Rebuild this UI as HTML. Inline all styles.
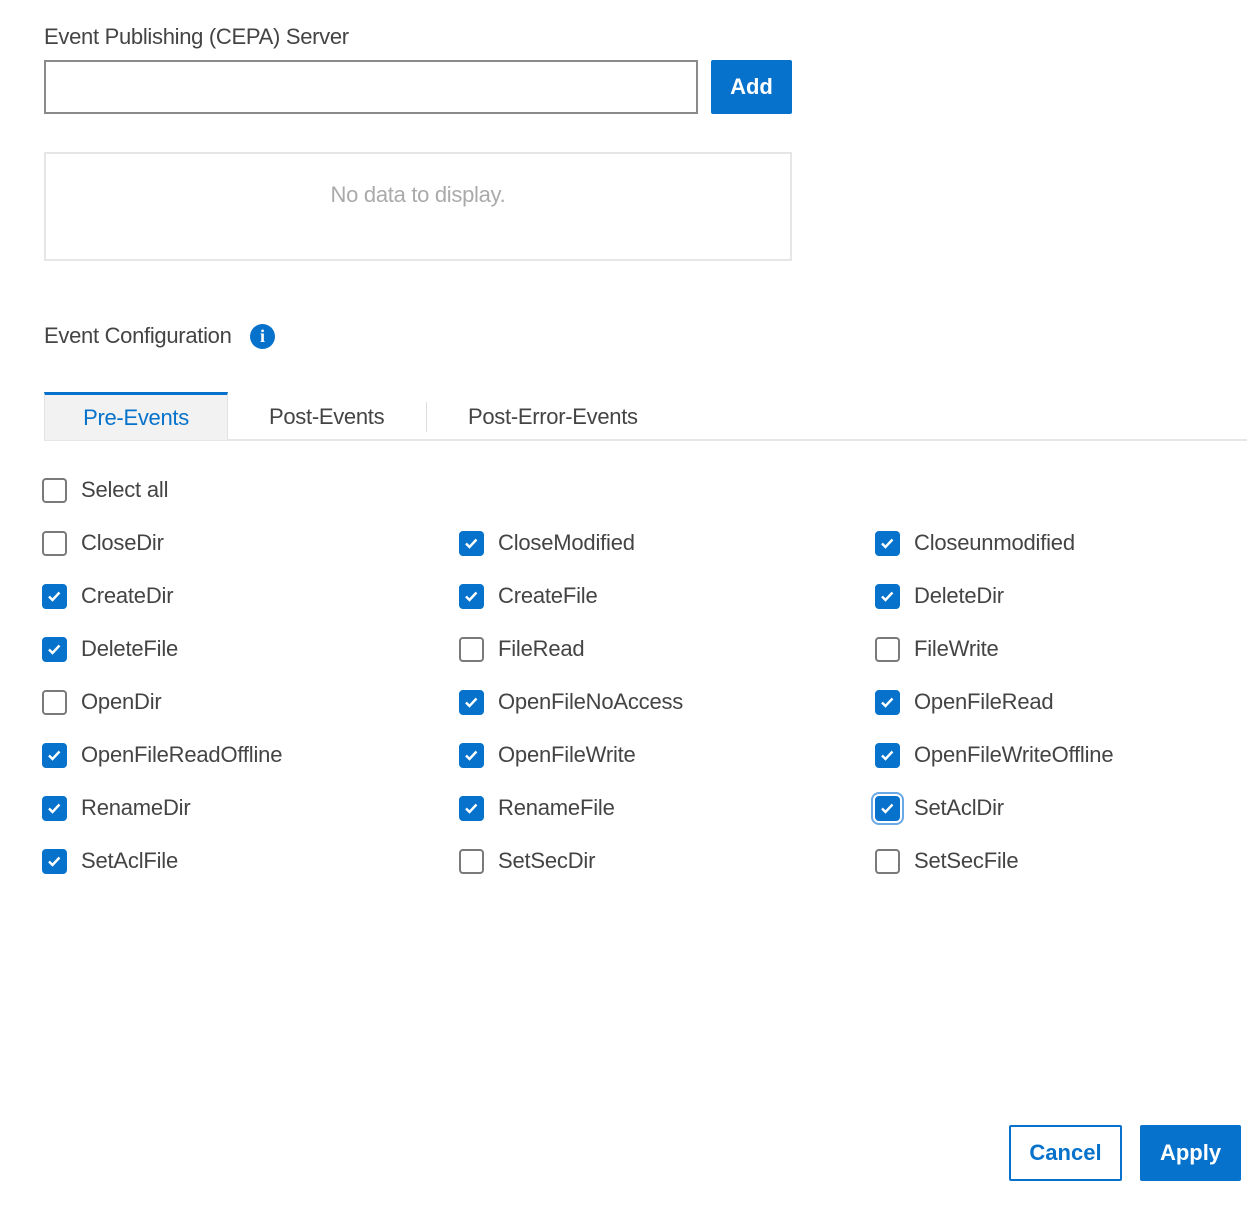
<!DOCTYPE html>
<html><head><meta charset="utf-8"><style>
*{box-sizing:border-box;margin:0;padding:0}
body{width:1253px;height:1205px;background:#fff;font-family:"Liberation Sans",sans-serif;color:#444;position:relative;overflow:hidden}
.a{position:absolute;white-space:nowrap}
.t{font-size:22px;line-height:26px;letter-spacing:-0.3px}
.cb{position:absolute;width:25px;height:25px;border:2px solid #7a7a7a;border-radius:4px;background:#fff}
.cb.on{background:#0672cb;border-color:#0672cb}
.cb.on svg{position:absolute;left:2px;top:2px}
.lbl{position:absolute;font-size:22px;line-height:26px;color:#444;letter-spacing:-0.2px;white-space:nowrap}
</style></head><body>
<div class="a t" style="left:44px;top:24px">Event Publishing (CEPA) Server</div>
<div class="a" style="left:44px;top:60px;width:654px;height:54px;border:2px solid #8a8a8a"></div>
<div class="a" style="left:711px;top:60px;width:81px;height:54px;background:#0672cb;border-radius:2px;color:#fff;font-weight:bold;font-size:22px;line-height:54px;text-align:center">Add</div>
<div class="a" style="left:44px;top:152px;width:748px;height:109px;border:2px solid #e6e6e6"></div>
<div class="a t" style="left:44px;top:182px;width:748px;text-align:center;color:#aaa">No data to display.</div>
<div class="a t" style="left:44px;top:323px">Event Configuration</div>
<div class="a" style="left:250px;top:324px;width:25px;height:25px;border-radius:50%;background:#0672cb;color:#fff;font-weight:bold;font-size:18px;line-height:25px;text-align:center;font-family:'Liberation Serif',serif">i</div>
<div class="a" style="left:44px;top:439px;width:1203px;height:2px;background:#e6e6e6"></div>
<div class="a" style="left:44px;top:392px;width:184px;height:48px;background:#f2f2f2;border-top:3px solid #0672cb;border-left:1px solid #e3e3e3;border-right:1px solid #e3e3e3"></div>
<div class="a t" style="left:44px;top:405px;width:184px;text-align:center;color:#0672cb">Pre-Events</div>
<div class="a t" style="left:269px;top:404px">Post-Events</div>
<div class="a" style="left:426px;top:402px;width:1px;height:30px;background:#ddd"></div>
<div class="a t" style="left:468px;top:404px">Post-Error-Events</div>
<div id="g"></div>
<div class="a" style="left:1009px;top:1125px;width:113px;height:56px;border:2px solid #0672cb;border-radius:2px;color:#0672cb;font-weight:bold;font-size:22px;line-height:52px;text-align:center">Cancel</div>
<div class="a" style="left:1140px;top:1125px;width:101px;height:56px;background:#0672cb;border-radius:2px;color:#fff;font-weight:bold;font-size:22px;line-height:56px;text-align:center">Apply</div>
<script>
var items=[["Select all",0,null,null],
[["CloseDir",0],["CloseModified",1],["Closeunmodified",1]],
[["CreateDir",1],["CreateFile",1],["DeleteDir",1]],
[["DeleteFile",1],["FileRead",0],["FileWrite",0]],
[["OpenDir",0],["OpenFileNoAccess",1],["OpenFileRead",1]],
[["OpenFileReadOffline",1],["OpenFileWrite",1],["OpenFileWriteOffline",1]],
[["RenameDir",1],["RenameFile",1],["SetAclDir",1]],
[["SetAclFile",1],["SetSecDir",0],["SetSecFile",0]]];
var xs=[42,459,875],h="";
var chk='<svg width="17" height="17" viewBox="0 0 17 17"><path d="M3 8.5l3.5 3.5 7-7.5" fill="none" stroke="#fff" stroke-width="2.4"/></svg>';
function cb(x,y,on,txt,focus){
 h+='<div class="cb'+(on?' on':'')+'" style="left:'+x+'px;top:'+(y-12)+'px'+(focus?';box-shadow:0 0 0 2px #fff,0 0 0 4px #6aa8e6':'')+'">'+(on?chk:'')+'</div>';
 h+='<div class="lbl" style="left:'+(x+39)+'px;top:'+(y-13)+'px">'+txt+'</div>';
}
cb(42,490,0,"Select all");
for(var r=1;r<items.length;r++){var y=490+53*r;for(var c=0;c<3;c++){cb(xs[c],y,items[r][c][1],items[r][c][0],r==6&&c==2);}}
document.getElementById("g").innerHTML=h;
</script>
</body></html>
